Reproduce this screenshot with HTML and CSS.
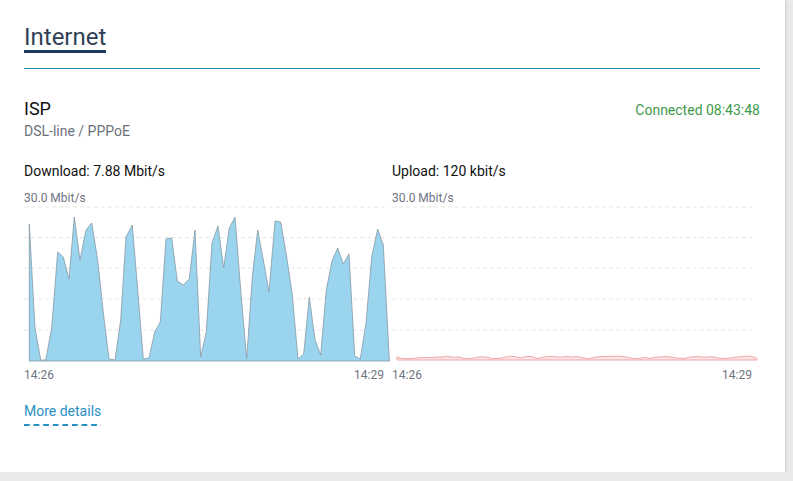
FILE: index.html
```html
<!DOCTYPE html>
<html lang="en">
<head>
  <meta charset="UTF-8" />
  <title>Internet</title>
  <link rel="stylesheet" href="styles.css">
</head>
<body>
  <div class="card">
    <h1 class="title"><span>Internet</span></h1>
    <div class="divider"></div>

    <div class="isp-row">
      <div class="isp-name">ISP</div>
      <div class="isp-status">Connected 08:43:48</div>
    </div>
    <div class="isp-type">DSL-line / PPPoE</div>

    <div class="charts">
      <div class="chart">
        <div class="chart-title">Download: 7.88 Mbit/s</div>
        <div class="chart-scale">30.0 Mbit/s</div>
        <svg class="chart-svg" width="364" height="160" viewBox="0 0 364 160">
          <g class="grid">
            <line x1="0" y1="1" x2="364" y2="1" />
            <line x1="0" y1="31.5" x2="364" y2="31.5" />
            <line x1="0" y1="62" x2="364" y2="62" />
            <line x1="0" y1="93" x2="364" y2="93" />
            <line x1="0" y1="124" x2="364" y2="124" />
          </g>
          <path class="area-down" d="M5.3,155 L5.3,18 L11,122 L16.7,154 L21.7,154 L27.7,122 L33.7,46 L39.3,51 L45,73 L50.3,11 L56,54 L62,24 L67.7,17 L73.7,54 L79,104 L85,153 L91,154 L96.7,114 L102,31 L108.3,19 L113.7,84 L119.3,153 L125,152 L130.7,126 L136.3,116 L142,33 L147.7,32 L153.3,75 L159.3,79 L165.3,73 L171,24 L176.7,151 L182.3,126 L188,37 L194,20 L199.7,62 L205.3,22 L211,11 L216.7,84 L222.7,153 L228.3,71 L233.7,24 L239.3,54 L245,86 L251,15 L256.7,16 L262.7,51 L268.3,89 L274,153 L279.7,148 L285.3,91 L291,134 L296.7,149 L302.3,84 L308,55 L313.7,42 L319.3,58 L325,48 L330.7,150 L336.3,153 L342,117 L347.7,51 L353.7,23 L359.3,39 L365.3,154 L365.3,155 Z" />
        </svg>
        <div class="chart-times"><span>14:26</span><span>14:29</span></div>
      </div>

      <div class="chart">
        <div class="chart-title">Upload: 120 kbit/s</div>
        <div class="chart-scale">30.0 Mbit/s</div>
        <svg class="chart-svg" width="364" height="160" viewBox="0 0 364 160">
          <g class="grid">
            <line x1="0" y1="1" x2="360" y2="1" />
            <line x1="0" y1="31.5" x2="360" y2="31.5" />
            <line x1="0" y1="62" x2="360" y2="62" />
            <line x1="0" y1="93" x2="360" y2="93" />
            <line x1="0" y1="124" x2="360" y2="124" />
          </g>
          <path class="area-up" d="M5,154 L5,151 L10.6,152.5 L16.3,152.6 L21.9,152.3 L27.5,151.6 L33.1,151.4 L38.8,151.5 L44.4,151.2 L50,151 L55.6,150.2 L61.3,151.4 L66.9,151 L72.5,152.6 L78.1,152.5 L83.8,151.6 L89.4,150.8 L95,151.2 L100.6,152.6 L106.3,152.4 L111.9,151.5 L117.5,150.2 L123.1,150.6 L128.8,151.8 L134.4,150.4 L140,150.6 L145.6,152.5 L151.3,151.3 L156.9,150.4 L162.5,150.6 L168.1,151.4 L173.8,150.4 L179.4,151.1 L185,150.5 L190.6,151.8 L196.3,152.6 L201.9,151.6 L207.5,150.6 L213.1,150.5 L218.8,150.4 L224.4,150.2 L230,150.4 L235.6,151.2 L241.3,152.4 L246.9,152.6 L252.5,151.4 L258.1,152.4 L263.8,151.2 L269.4,150.8 L275,150.5 L280.6,151.3 L286.3,152.2 L291.9,152.5 L297.5,151.2 L303.1,150.5 L308.8,150.9 L314.4,151.1 L320,150.7 L325.6,151.8 L331.3,152.5 L336.9,152.2 L342.5,151.3 L348.1,150.9 L353.8,150.2 L359.4,150.4 L365,152.4 L365,154 Z" />
        </svg>
        <div class="chart-times"><span>14:26</span><span>14:29</span></div>
      </div>
    </div>

    <a class="more-link" href="#">More details</a>
  </div>
</body>
</html>
```

FILE: styles.css
```css
body {
  margin: 0;
  background-color: #e9e9e9;
  font-family: Roboto, 'Liberation Sans', sans-serif;
  color: #1a1a1a;
}

.card {
  box-sizing: border-box;
  width: 785px;
  height: 472px;
  padding: 24px 25px 0 24px;
  background: #fff;
  box-shadow: 0 1px 3px rgba(0, 0, 0, 0.22);
}

.title {
  margin: 0;
  font-size: 24px;
  font-weight: 400;
  line-height: 26px;
  color: #2f3f55;
}

.title span {
  display: inline-block;
  border-bottom: 3px solid #1d3a5e;
}

.divider {
  margin-top: 15px;
  height: 1px;
  background: #2f8bb8;
}

.isp-row {
  display: flex;
  justify-content: space-between;
  align-items: baseline;
  margin-top: 29px;
}

.isp-name {
  font-size: 18px;
  line-height: 22px;
  color: #111;
}

.isp-status {
  font-size: 14px;
  line-height: 18px;
  color: #3f9a4c;
}

.isp-type {
  margin-top: 2px;
  font-size: 14px;
  line-height: 18px;
  color: #6b717a;
}

.charts {
  display: grid;
  grid-template-columns: 364px 364px;
  gap: 4px;
  margin-top: 22px;
}

.chart-title {
  font-size: 14px;
  line-height: 18px;
  color: #111;
}

.chart-scale {
  margin-top: 10px;
  font-size: 12px;
  line-height: 16px;
  color: #6d7480;
}

.chart-svg {
  display: block;
  overflow: visible;
}

.grid line {
  stroke: #e6e6e6;
  stroke-width: 1;
  stroke-dasharray: 4 3;
}

.area-down {
  fill: #9bd4ee;
  stroke: #8798a4;
  stroke-width: 0.8;
  stroke-linejoin: round;
}

.area-up {
  fill: #fbe4e4;
  stroke: #f1a8ab;
  stroke-width: 1;
  stroke-linejoin: round;
}

.chart-times {
  display: flex;
  justify-content: space-between;
  padding-right: 4px;
  margin-top: 1px;
  font-size: 12px;
  line-height: 16px;
  color: #6d7480;
}

.more-link {
  display: inline-block;
  margin-top: 19px;
  padding-bottom: 6px;
  font-size: 14px;
  line-height: 18px;
  color: #2b8fc4;
  text-decoration: none;
  background-image: linear-gradient(to right, #2b8fc4 62%, transparent 62%);
  background-size: 9.6px 2px;
  background-repeat: repeat-x;
  background-position: 0 100%;
}
```
